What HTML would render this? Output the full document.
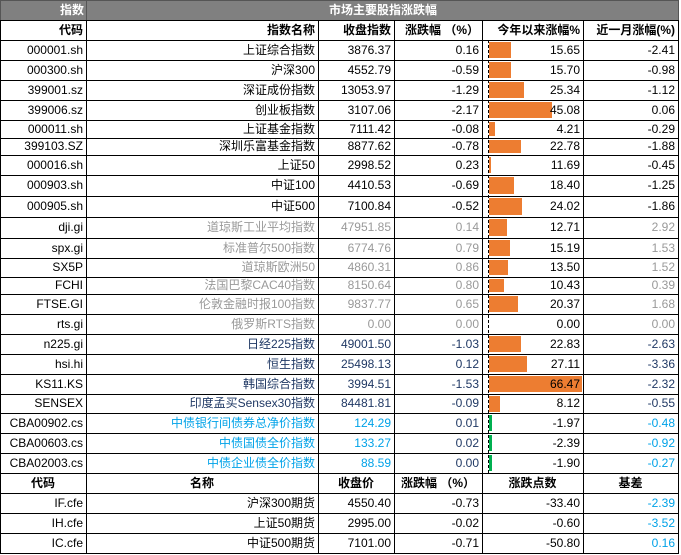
<!DOCTYPE html>
<html><head><meta charset="utf-8"><style>
body{margin:0;width:681px;height:555px;background:#fff;position:relative;overflow:hidden;font-family:"Liberation Sans","Noto Sans CJK SC",sans-serif;font-size:12px;color:#000}
.r{position:absolute;left:0;width:679px}
.r>span{position:absolute;top:0;box-sizing:border-box;padding-right:3px;text-align:right;white-space:nowrap}
.c1{left:0;width:86px}.c2{left:86px;width:232px}.c3{left:318px;width:76px}.c4{left:394px;width:88px}.c5{left:482px;width:101px}.c6{left:583px;width:95px}
.h{position:absolute;left:0;width:679px;height:1px;background:#000}
.v{position:absolute;top:20px;height:534px;width:1px;background:#000}
.b{position:absolute;left:489px;background:#ed7d31}
.g{position:absolute;left:489px;width:3px;background:#00b050}
.gr span.n{color:#999}
.db span.n{color:#1f3864}
.lb{color:#00a2e8!important}
.bd span{font-weight:bold}
.ce span{text-align:center;padding:0}
</style></head><body>
<div style="position:absolute;left:0;top:0;width:679px;height:20px;background:#808080"></div>
<div style="position:absolute;left:0;top:0;width:84px;height:20px;line-height:20px;text-align:right;color:#fff;font-weight:bold">指数</div>
<div style="position:absolute;left:86px;top:0;width:1px;height:20px;background:#555"></div>
<div style="position:absolute;left:329px;top:0;height:20px;line-height:20px;color:#fff;font-weight:bold">市场主要股指涨跌幅</div>
<div style="position:absolute;left:488px;top:40px;height:433px;border-left:1px dashed #000"></div>

<div class="b" style="top:42px;height:16px;width:22px"></div>
<div class="b" style="top:62px;height:16px;width:22px"></div>
<div class="b" style="top:82px;height:16px;width:35px"></div>
<div class="b" style="top:102px;height:16px;width:63px"></div>
<div class="b" style="top:122px;height:14px;width:6px"></div>
<div class="b" style="top:140px;height:13px;width:32px"></div>
<div class="b" style="top:157px;height:16px;width:2px"></div>
<div class="b" style="top:177px;height:17px;width:25px"></div>
<div class="b" style="top:198px;height:17px;width:33px"></div>
<div class="b" style="top:219px;height:17px;width:18px"></div>
<div class="b" style="top:240px;height:16px;width:21px"></div>
<div class="b" style="top:260px;height:15px;width:19px"></div>
<div class="b" style="top:279px;height:13px;width:15px"></div>
<div class="b" style="top:296px;height:16px;width:29px"></div>
<div class="b" style="top:336px;height:16px;width:32px"></div>
<div class="b" style="top:356px;height:16px;width:38px"></div>
<div class="b" style="top:376px;height:16px;width:93px"></div>
<div class="b" style="top:396px;height:16px;width:11px"></div>
<div class="g" style="top:415px;height:16px"></div>
<div class="g" style="top:435px;height:16px"></div>
<div class="g" style="top:455px;height:16px"></div>

<div class="r bd" style="top:20px;height:20px;line-height:20px"><span class="c1">代码</span><span class="c2">指数名称</span><span class="c3">收盘指数</span><span class="c4">涨跌幅 （%）</span><span class="c5">今年以来涨幅%</span><span class="c6">近一月涨幅(%)</span></div>
<div class="r" style="top:40px;height:20px;line-height:20px"><span class="c1">000001.sh</span><span class="c2">上证综合指数</span><span class="c3">3876.37</span><span class="c4">0.16</span><span class="c5">15.65</span><span class="c6">-2.41</span></div>
<div class="r" style="top:60px;height:20px;line-height:20px"><span class="c1">000300.sh</span><span class="c2">沪深300</span><span class="c3">4552.79</span><span class="c4">-0.59</span><span class="c5">15.70</span><span class="c6">-0.98</span></div>
<div class="r" style="top:80px;height:20px;line-height:20px"><span class="c1">399001.sz</span><span class="c2">深证成份指数</span><span class="c3">13053.97</span><span class="c4">-1.29</span><span class="c5">25.34</span><span class="c6">-1.12</span></div>
<div class="r" style="top:100px;height:20px;line-height:20px"><span class="c1">399006.sz</span><span class="c2">创业板指数</span><span class="c3">3107.06</span><span class="c4">-2.17</span><span class="c5">45.08</span><span class="c6">0.06</span></div>
<div class="r" style="top:120px;height:18px;line-height:18px"><span class="c1">000011.sh</span><span class="c2">上证基金指数</span><span class="c3">7111.42</span><span class="c4">-0.08</span><span class="c5">4.21</span><span class="c6">-0.29</span></div>
<div class="r" style="top:138px;height:17px;line-height:17px"><span class="c1">399103.SZ</span><span class="c2">深圳乐富基金指数</span><span class="c3">8877.62</span><span class="c4">-0.78</span><span class="c5">22.78</span><span class="c6">-1.88</span></div>
<div class="r" style="top:155px;height:20px;line-height:20px"><span class="c1">000016.sh</span><span class="c2">上证50</span><span class="c3">2998.52</span><span class="c4">0.23</span><span class="c5">11.69</span><span class="c6">-0.45</span></div>
<div class="r" style="top:175px;height:21px;line-height:21px"><span class="c1">000903.sh</span><span class="c2">中证100</span><span class="c3">4410.53</span><span class="c4">-0.69</span><span class="c5">18.40</span><span class="c6">-1.25</span></div>
<div class="r" style="top:196px;height:21px;line-height:21px"><span class="c1">000905.sh</span><span class="c2">中证500</span><span class="c3">7100.84</span><span class="c4">-0.52</span><span class="c5">24.02</span><span class="c6">-1.86</span></div>
<div class="r gr" style="top:217px;height:21px;line-height:21px"><span class="c1">dji.gi</span><span class="c2 n">道琼斯工业平均指数</span><span class="c3 n">47951.85</span><span class="c4 n">0.14</span><span class="c5">12.71</span><span class="c6 n">2.92</span></div>
<div class="r gr" style="top:238px;height:20px;line-height:20px"><span class="c1">spx.gi</span><span class="c2 n">标准普尔500指数</span><span class="c3 n">6774.76</span><span class="c4 n">0.79</span><span class="c5">15.19</span><span class="c6 n">1.53</span></div>
<div class="r gr" style="top:258px;height:19px;line-height:19px"><span class="c1">SX5P</span><span class="c2 n">道琼斯欧洲50</span><span class="c3 n">4860.31</span><span class="c4 n">0.86</span><span class="c5">13.50</span><span class="c6 n">1.52</span></div>
<div class="r gr" style="top:277px;height:17px;line-height:17px"><span class="c1">FCHI</span><span class="c2 n">法国巴黎CAC40指数</span><span class="c3 n">8150.64</span><span class="c4 n">0.80</span><span class="c5">10.43</span><span class="c6 n">0.39</span></div>
<div class="r gr" style="top:294px;height:20px;line-height:20px"><span class="c1">FTSE.GI</span><span class="c2 n">伦敦金融时报100指数</span><span class="c3 n">9837.77</span><span class="c4 n">0.65</span><span class="c5">20.37</span><span class="c6 n">1.68</span></div>
<div class="r gr" style="top:314px;height:20px;line-height:20px"><span class="c1">rts.gi</span><span class="c2 n">俄罗斯RTS指数</span><span class="c3 n">0.00</span><span class="c4 n">0.00</span><span class="c5">0.00</span><span class="c6 n">0.00</span></div>
<div class="r db" style="top:334px;height:20px;line-height:20px"><span class="c1">n225.gi</span><span class="c2 n">日经225指数</span><span class="c3 n">49001.50</span><span class="c4 n">-1.03</span><span class="c5">22.83</span><span class="c6 n">-2.63</span></div>
<div class="r db" style="top:354px;height:20px;line-height:20px"><span class="c1">hsi.hi</span><span class="c2 n">恒生指数</span><span class="c3 n">25498.13</span><span class="c4 n">0.12</span><span class="c5">27.11</span><span class="c6 n">-3.36</span></div>
<div class="r db" style="top:374px;height:20px;line-height:20px"><span class="c1">KS11.KS</span><span class="c2 n">韩国综合指数</span><span class="c3 n">3994.51</span><span class="c4 n">-1.53</span><span class="c5">66.47</span><span class="c6 n">-2.32</span></div>
<div class="r db" style="top:394px;height:19px;line-height:19px"><span class="c1">SENSEX</span><span class="c2 n">印度孟买Sensex30指数</span><span class="c3 n">84481.81</span><span class="c4 n">-0.09</span><span class="c5">8.12</span><span class="c6 n">-0.55</span></div>
<div class="r db" style="top:413px;height:20px;line-height:20px"><span class="c1">CBA00902.cs</span><span class="c2 n lb">中债银行间债券总净价指数</span><span class="c3 n lb">124.29</span><span class="c4 n">0.01</span><span class="c5">-1.97</span><span class="c6 n lb">-0.48</span></div>
<div class="r db" style="top:433px;height:20px;line-height:20px"><span class="c1">CBA00603.cs</span><span class="c2 n lb">中债国债全价指数</span><span class="c3 n lb">133.27</span><span class="c4 n">0.02</span><span class="c5">-2.39</span><span class="c6 n lb">-0.92</span></div>
<div class="r db" style="top:453px;height:20px;line-height:20px"><span class="c1">CBA02003.cs</span><span class="c2 n lb">中债企业债全价指数</span><span class="c3 n lb">88.59</span><span class="c4 n">0.00</span><span class="c5">-1.90</span><span class="c6 n lb">-0.27</span></div>
<div class="r bd ce" style="top:473px;height:20px;line-height:20px"><span class="c1">代码</span><span class="c2">名称</span><span class="c3">收盘价</span><span class="c4">涨跌幅 （%）</span><span class="c5">涨跌点数</span><span class="c6">基差</span></div>
<div class="r" style="top:493px;height:20px;line-height:20px"><span class="c1">IF.cfe</span><span class="c2">沪深300期货</span><span class="c3">4550.40</span><span class="c4">-0.73</span><span class="c5">-33.40</span><span class="c6 lb">-2.39</span></div>
<div class="r" style="top:513px;height:20px;line-height:20px"><span class="c1">IH.cfe</span><span class="c2">上证50期货</span><span class="c3">2995.00</span><span class="c4">-0.02</span><span class="c5">-0.60</span><span class="c6 lb">-3.52</span></div>
<div class="r" style="top:533px;height:20px;line-height:20px"><span class="c1">IC.cfe</span><span class="c2">中证500期货</span><span class="c3">7101.00</span><span class="c4">-0.71</span><span class="c5">-50.80</span><span class="c6 lb">0.16</span></div>

<div class="h" style="top:0;background:#555"></div>
<div class="h" style="top:20px"></div><div class="h" style="top:40px"></div><div class="h" style="top:60px"></div><div class="h" style="top:80px"></div><div class="h" style="top:100px"></div><div class="h" style="top:120px"></div><div class="h" style="top:138px"></div><div class="h" style="top:155px"></div><div class="h" style="top:175px"></div><div class="h" style="top:196px"></div><div class="h" style="top:217px"></div><div class="h" style="top:238px"></div><div class="h" style="top:258px"></div><div class="h" style="top:277px"></div><div class="h" style="top:294px"></div><div class="h" style="top:314px"></div><div class="h" style="top:334px"></div><div class="h" style="top:354px"></div><div class="h" style="top:374px"></div><div class="h" style="top:394px"></div><div class="h" style="top:413px"></div><div class="h" style="top:433px"></div><div class="h" style="top:453px"></div><div class="h" style="top:473px"></div><div class="h" style="top:493px"></div><div class="h" style="top:513px"></div><div class="h" style="top:533px"></div><div class="h" style="top:553px"></div>
<div class="v" style="left:0"></div><div class="v" style="left:86px"></div><div class="v" style="left:318px"></div><div class="v" style="left:394px"></div><div class="v" style="left:482px"></div><div class="v" style="left:583px"></div><div class="v" style="left:678px"></div>
<div style="position:absolute;left:0;top:0;width:1px;height:20px;background:#555"></div><div style="position:absolute;left:678px;top:0;width:1px;height:20px;background:#555"></div>
</body></html>
